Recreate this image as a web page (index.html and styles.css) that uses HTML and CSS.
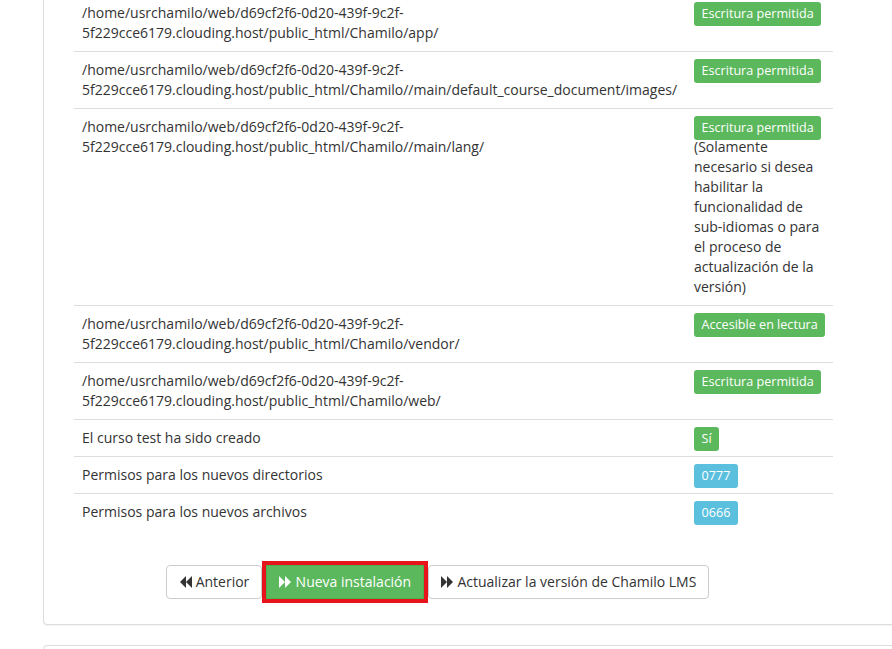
FILE: index.html
```html
<!DOCTYPE html>
<html lang="es">
<head>
<meta charset="utf-8">
<title>Chamilo - Instalación</title>
<link rel="stylesheet" href="styles.css">
</head>
<body>
<div class="panel">
  <div class="panel-body">
    <table class="req-table">
      <colgroup><col class="col-path"><col class="col-status"></colgroup>
      <tbody>
        <tr>
          <td>/home/usrchamilo/web/d69cf2f6-0d20-439f-9c2f-5f229cce6179.clouding.host/public_html/Chamilo/app/</td>
          <td><span class="label label-success">Escritura permitida</span></td>
        </tr>
        <tr>
          <td>/home/usrchamilo/web/d69cf2f6-0d20-439f-9c2f-5f229cce6179.clouding.host/public_html/Chamilo//main/default_course_document/images/</td>
          <td><span class="label label-success">Escritura permitida</span></td>
        </tr>
        <tr>
          <td>/home/usrchamilo/web/d69cf2f6-0d20-439f-9c2f-5f229cce6179.clouding.host/public_html/Chamilo//main/lang/</td>
          <td><span class="label label-success">Escritura permitida</span><br>(Solamente necesario si desea habilitar la funcionalidad de sub-idiomas o para el proceso de actualización de la versión)</td>
        </tr>
        <tr>
          <td>/home/usrchamilo/web/d69cf2f6-0d20-439f-9c2f-5f229cce6179.clouding.host/public_html/Chamilo/vendor/</td>
          <td><span class="label label-success">Accesible en lectura</span></td>
        </tr>
        <tr>
          <td>/home/usrchamilo/web/d69cf2f6-0d20-439f-9c2f-5f229cce6179.clouding.host/public_html/Chamilo/web/</td>
          <td><span class="label label-success">Escritura permitida</span></td>
        </tr>
        <tr>
          <td>El curso test ha sido creado</td>
          <td><span class="label label-success">Sí</span></td>
        </tr>
        <tr>
          <td>Permisos para los nuevos directorios</td>
          <td><span class="label label-info">0777</span></td>
        </tr>
        <tr>
          <td>Permisos para los nuevos archivos</td>
          <td><span class="label label-info">0666</span></td>
        </tr>
      </tbody>
    </table>
    <div class="actions">
      <button class="btn btn-default" type="button"><svg class="ico" viewBox="0 0 13 12" aria-hidden="true"><polygon points="13,0 13,12 7,6"/><polygon points="7,0 7,12 1,6"/></svg> Anterior</button>
      <button class="btn btn-success btn-highlight" type="button"><svg class="ico" viewBox="0 0 13 12" aria-hidden="true"><polygon points="0,0 0,12 6,6"/><polygon points="6,0 6,12 12,6"/></svg> Nueva instalación</button>
      <button class="btn btn-default" type="button"><svg class="ico" viewBox="0 0 13 12" aria-hidden="true"><polygon points="0,0 0,12 6,6"/><polygon points="6,0 6,12 12,6"/></svg> Actualizar la versión de Chamilo LMS</button>
    </div>
  </div>
</div>
<div class="panel panel-next"></div>
</body>
</html>
```

FILE: styles.css
```css
html, body {
  margin: 0;
  padding: 0;
  overflow: hidden;
  background: #fff;
}

body {
  font-family: "Open Sans", "Liberation Sans", sans-serif;
  font-size: 14px;
  line-height: 20px;
  color: #333;
}

.panel {
  margin: -7px 0 20px 43px;
  width: 900px;
  border: 1px solid #ddd;
  border-radius: 4px;
  box-shadow: 0 1px 1px rgba(0, 0, 0, 0.05);
  background: #fff;
}

.panel-body {
  padding: 0 0 25px 30px;
}

.panel-next {
  margin-top: 0;
  height: 60px;
}

.req-table {
  width: 759px;
  table-layout: fixed;
  border-collapse: collapse;
  border-spacing: 0;
  margin-bottom: 35px;
}

.col-path { width: 612px; }
.col-status { width: 147px; }

.req-table td {
  padding: 8px;
  border-top: 1px solid #ddd;
  vertical-align: top;
  line-height: 20px;
}

.label {
  display: inline;
  white-space: nowrap;
  font-size: 12.6px;
  line-height: 1;
  padding: 3px 0.6em 4px;
  border-radius: 3px;
  color: #fff;
}

.label-success { background: #5cb85c; }
.label-info { background: #5bc0de; }

.actions {
  padding-left: 92px;
}

.btn {
  display: inline-block;
  font-family: "Open Sans", "Liberation Sans", sans-serif;
  font-size: 14px;
  line-height: 20px;
  padding: 6px 12px;
  margin: 0;
  border: 1px solid #ccc;
  border-radius: 4px;
  background: #fff;
  color: #333;
  vertical-align: middle;
  cursor: pointer;
}

.btn-success {
  background: #5cb85c;
  border-color: #4cae4c;
  color: #fff;
}

.btn-highlight {
  outline: 4px solid #e8141c;
  border-radius: 0;
}

.ico {
  width: 13px;
  height: 12px;
  fill: currentColor;
  vertical-align: -1px;
}
```
